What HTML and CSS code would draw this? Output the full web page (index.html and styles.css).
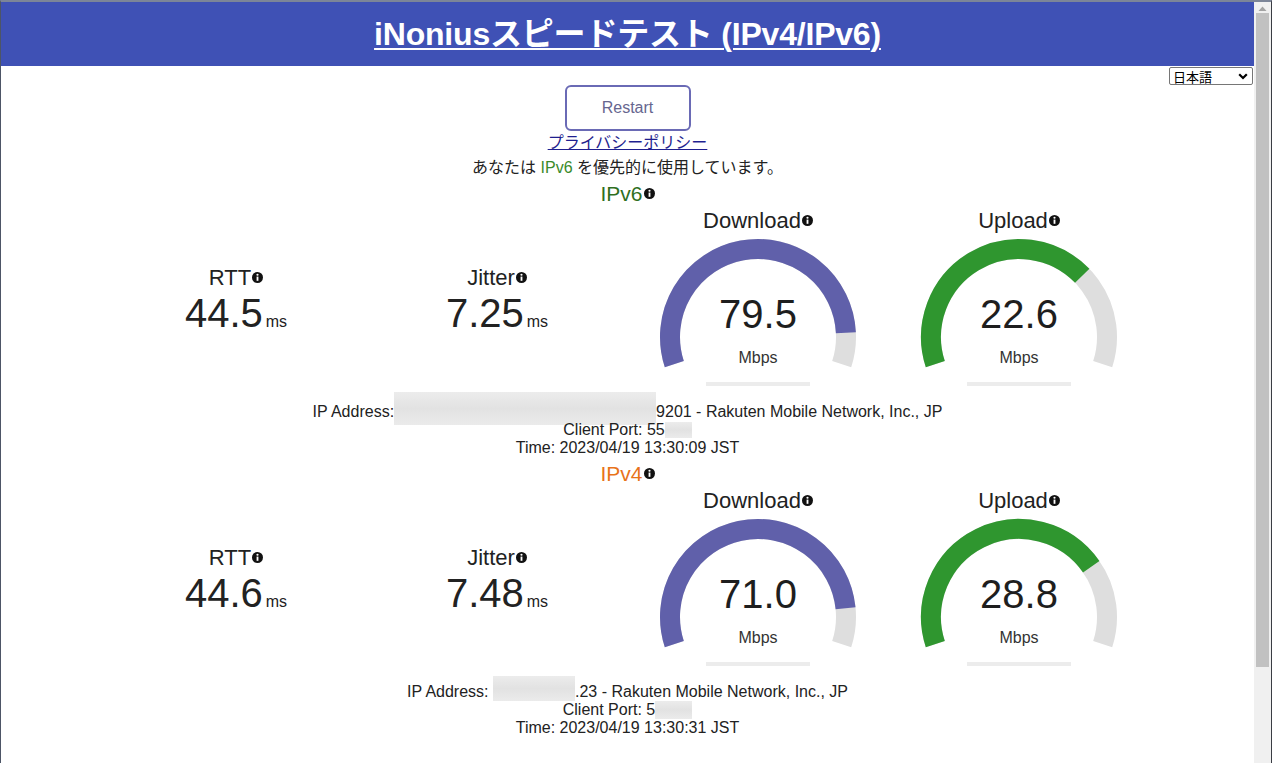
FILE: index.html
```html
<!DOCTYPE html>
<html lang="ja">
<head>
<meta charset="utf-8">
<title>iNoniusスピードテスト</title>
<link rel="stylesheet" href="styles.css">
</head>
<body>
<div class="page">
  <header class="topbar">
    <h1 class="title"><a href="#">iNoniusスピードテスト (IPv4/IPv6)</a></h1>
  </header>
  <div class="lang-row">
    <div class="lang-select"><span>日本語</span><svg class="chev" width="10" height="7" viewBox="0 0 10 7"><path d="M1.2 1.2 L5 5 L8.8 1.2" fill="none" stroke="#000" stroke-width="2.2"/></svg></div>
  </div>
  <div class="controls">
    <button class="restart" type="button">Restart</button>
    <a class="privacy" href="#">プライバシーポリシー</a>
    <p class="pref">あなたは <span class="v6">IPv6</span> を優先的に使用しています。</p>
  </div>

  <section class="test">
    <h2 class="proto proto-v6">IPv6<svg class="info" width="11" height="11" viewBox="0 0 12 12"><circle cx="6" cy="6" r="6" fill="#111"/><circle cx="6" cy="3" r="1.2" fill="#fff"/><rect x="5" y="5" width="2" height="4.6" fill="#fff"/></svg></h2>
    <div class="metrics">
      <div class="metric ping">
        <div class="label">RTT<svg class="info" width="11" height="11" viewBox="0 0 12 12"><circle cx="6" cy="6" r="6" fill="#111"/><circle cx="6" cy="3" r="1.2" fill="#fff"/><rect x="5" y="5" width="2" height="4.6" fill="#fff"/></svg></div>
        <div class="value"><span class="num">44.5</span><span class="unit">ms</span></div>
      </div>
      <div class="metric ping">
        <div class="label">Jitter<svg class="info" width="11" height="11" viewBox="0 0 12 12"><circle cx="6" cy="6" r="6" fill="#111"/><circle cx="6" cy="3" r="1.2" fill="#fff"/><rect x="5" y="5" width="2" height="4.6" fill="#fff"/></svg></div>
        <div class="value"><span class="num">7.25</span><span class="unit">ms</span></div>
      </div>
      <div class="metric gauge">
        <div class="label">Download<svg class="info" width="11" height="11" viewBox="0 0 12 12"><circle cx="6" cy="6" r="6" fill="#111"/><circle cx="6" cy="3" r="1.2" fill="#fff"/><rect x="5" y="5" width="2" height="4.6" fill="#fff"/></svg></div>
        <svg class="meter" width="260" height="154" viewBox="0 0 260 154">
          <path class="meter-bg" d="M46.31 130.19 A88 88 0 1 1 213.69 130.19"/>
          <path class="meter-dl" d="M46.31 130.19 A88 88 0 1 1 217.89 98.67"/>
          <rect class="meter-prog" x="78" y="148" width="104" height="4"/>
          <text class="meter-val" x="130" y="94">79.5</text>
          <text class="meter-unit" x="130" y="129">Mbps</text>
        </svg>
      </div>
      <div class="metric gauge">
        <div class="label">Upload<svg class="info" width="11" height="11" viewBox="0 0 12 12"><circle cx="6" cy="6" r="6" fill="#111"/><circle cx="6" cy="3" r="1.2" fill="#fff"/><rect x="5" y="5" width="2" height="4.6" fill="#fff"/></svg></div>
        <svg class="meter" width="260" height="154" viewBox="0 0 260 154">
          <path class="meter-bg" d="M46.31 130.19 A88 88 0 1 1 213.69 130.19"/>
          <path class="meter-ul" d="M46.31 130.19 A88 88 0 0 1 193.24 41.80"/>
          <rect class="meter-prog" x="78" y="148" width="104" height="4"/>
          <text class="meter-val" x="130" y="94">22.6</text>
          <text class="meter-unit" x="130" y="129">Mbps</text>
        </svg>
      </div>
    </div>
    <div class="ipinfo">
      <div>IP Address:<span class="redact r6-ip"></span>9201 - Rakuten Mobile Network, Inc., JP</div>
      <div>Client Port: 55<span class="redact r6-port"></span></div>
      <div>Time: 2023/04/19 13:30:09 JST</div>
    </div>
  </section>

  <section class="test">
    <h2 class="proto proto-v4">IPv4<svg class="info" width="11" height="11" viewBox="0 0 12 12"><circle cx="6" cy="6" r="6" fill="#111"/><circle cx="6" cy="3" r="1.2" fill="#fff"/><rect x="5" y="5" width="2" height="4.6" fill="#fff"/></svg></h2>
    <div class="metrics">
      <div class="metric ping">
        <div class="label">RTT<svg class="info" width="11" height="11" viewBox="0 0 12 12"><circle cx="6" cy="6" r="6" fill="#111"/><circle cx="6" cy="3" r="1.2" fill="#fff"/><rect x="5" y="5" width="2" height="4.6" fill="#fff"/></svg></div>
        <div class="value"><span class="num">44.6</span><span class="unit">ms</span></div>
      </div>
      <div class="metric ping">
        <div class="label">Jitter<svg class="info" width="11" height="11" viewBox="0 0 12 12"><circle cx="6" cy="6" r="6" fill="#111"/><circle cx="6" cy="3" r="1.2" fill="#fff"/><rect x="5" y="5" width="2" height="4.6" fill="#fff"/></svg></div>
        <div class="value"><span class="num">7.48</span><span class="unit">ms</span></div>
      </div>
      <div class="metric gauge">
        <div class="label">Download<svg class="info" width="11" height="11" viewBox="0 0 12 12"><circle cx="6" cy="6" r="6" fill="#111"/><circle cx="6" cy="3" r="1.2" fill="#fff"/><rect x="5" y="5" width="2" height="4.6" fill="#fff"/></svg></div>
        <svg class="meter" width="260" height="154" viewBox="0 0 260 154">
          <path class="meter-bg" d="M46.31 130.19 A88 88 0 1 1 213.69 130.19"/>
          <path class="meter-dl" d="M46.31 130.19 A88 88 0 1 1 217.57 94.29"/>
          <rect class="meter-prog" x="78" y="148" width="104" height="4"/>
          <text class="meter-val" x="130" y="94">71.0</text>
          <text class="meter-unit" x="130" y="129">Mbps</text>
        </svg>
      </div>
      <div class="metric gauge">
        <div class="label">Upload<svg class="info" width="11" height="11" viewBox="0 0 12 12"><circle cx="6" cy="6" r="6" fill="#111"/><circle cx="6" cy="3" r="1.2" fill="#fff"/><rect x="5" y="5" width="2" height="4.6" fill="#fff"/></svg></div>
        <svg class="meter" width="260" height="154" viewBox="0 0 260 154">
          <path class="meter-bg" d="M46.31 130.19 A88 88 0 1 1 213.69 130.19"/>
          <path class="meter-ul" d="M46.31 130.19 A88 88 0 0 1 202.23 52.73"/>
          <rect class="meter-prog" x="78" y="148" width="104" height="4"/>
          <text class="meter-val" x="130" y="94">28.8</text>
          <text class="meter-unit" x="130" y="129">Mbps</text>
        </svg>
      </div>
    </div>
    <div class="ipinfo">
      <div>IP Address: <span class="redact r4-ip"></span>.23 - Rakuten Mobile Network, Inc., JP</div>
      <div>Client Port: 5<span class="redact r4-port"></span></div>
      <div>Time: 2023/04/19 13:30:31 JST</div>
    </div>
  </section>
</div>
<div class="scrollbar">
  <div class="sb-arrow"><svg width="9" height="5" viewBox="0 0 9 5"><path d="M0.5 5 L4.5 0.6 L8.5 5 Z" fill="#a3a3a3"/></svg></div>
  <div class="sb-thumb"></div>
</div>
</body>
</html>
```

FILE: styles.css
```css
* { box-sizing: border-box; }

html, body { margin: 0; padding: 0; }

body {
  display: flex;
  height: 763px;
  overflow: hidden;
  border-top: 2px solid #7c8598;
  border-left: 1px solid #4d5566;
  border-right: 1px solid #3a3d44;
  background: #fff;
  color: #222;
  font-family: "Liberation Sans", "Noto Sans CJK JP", Arial, sans-serif;
}

.page {
  flex: 1;
  min-width: 0;
  text-align: center;
}

/* header */
.topbar {
  background: #3f51b5;
  height: 64px;
  display: flex;
  align-items: center;
  justify-content: center;
}

.title {
  margin: 0;
  font-size: 32px;
  font-weight: bold;
  line-height: 64px;
  letter-spacing: -0.2px;
}

.title a {
  color: #fff;
  text-decoration: underline;
  text-decoration-thickness: 2px;
  text-underline-offset: 3px;
}

/* language picker */
.lang-row {
  display: flex;
  justify-content: flex-end;
  height: 19px;
  padding: 1px 1px 0 0;
}

.lang-select {
  width: 84px;
  height: 18px;
  border: 1px solid #767676;
  border-radius: 2px;
  display: flex;
  align-items: center;
  justify-content: space-between;
  padding: 0 4px 0 3px;
  font-size: 13px;
  color: #000;
  background: #fff;
}

.chev { display: block; }

/* controls */
.controls {
  display: flex;
  flex-direction: column;
  align-items: center;
}

.restart {
  width: 126px;
  height: 46px;
  border: 2px solid #6a6ab5;
  border-radius: 6px;
  background: #fff;
  color: #66668f;
  font-family: inherit;
  font-size: 16px;
  padding: 0;
}

.privacy {
  font-size: 16px;
  line-height: 24px;
  color: #1f1f8f;
  text-decoration: underline;
}

.pref {
  margin: 0;
  font-size: 16px;
  line-height: 26px;
  color: #222;
}

.v6 { color: #3a8a2a; }

/* test sections */
.proto {
  margin: 0;
  font-size: 21px;
  line-height: 26px;
  font-weight: normal;
}

.proto-v6 { color: #2f6f1f; }
.proto-v4 { color: #e8731a; }

.info {
  display: inline-block;
  vertical-align: 2px;
  margin-left: 1px;
}

.metrics {
  display: grid;
  grid-template-columns: repeat(4, 261px);
  justify-content: center;
  align-items: center;
  padding-top: 1px;
}

.metric {
  display: flex;
  flex-direction: column;
  align-items: center;
}

.ping { padding-top: 13px; }

.label {
  font-size: 22px;
  line-height: 26px;
  color: #222;
}

.value {
  line-height: 44px;
  white-space: nowrap;
}

.num {
  font-size: 40px;
  color: #222;
}

.unit {
  font-size: 16px;
  margin-left: 3px;
  color: #222;
}

.meter { display: block; }

.meter-bg,
.meter-dl,
.meter-ul {
  fill: none;
  stroke-width: 20;
}

.meter-bg { stroke: #dedede; }
.meter-dl { stroke: #6060aa; }
.meter-ul { stroke: #2f962f; }
.meter-prog { fill: #ececec; }

.meter-val {
  font-size: 40px;
  fill: #1e1e1e;
  text-anchor: middle;
}

.meter-unit {
  font-size: 16px;
  fill: #333;
  text-anchor: middle;
}

.ipinfo {
  margin: 15px 0 4px;
  font-size: 16px;
  line-height: 18px;
  color: #222;
}

.redact {
  display: inline-block;
  vertical-align: top;
  background: linear-gradient(180deg, #ececec 0%, #e2e2e2 50%, #ebebeb 100%);
}

.r6-ip { width: 262px; height: 33px; margin-top: -11px; margin-bottom: -4px; }
.r6-port { width: 27px; height: 16px; margin-top: 1px; }
.r4-ip { width: 82px; height: 25px; margin-top: -7px; }
.r4-port { width: 37px; height: 18px; }

/* scrollbar */
.scrollbar {
  width: 17px;
  flex: none;
  background: #f0f0f0;
  display: flex;
  flex-direction: column;
  align-items: center;
}

.sb-arrow {
  height: 11px;
  display: flex;
  align-items: center;
  padding-top: 2px;
}

.sb-arrow svg { display: block; }

.sb-thumb {
  width: 13px;
  height: 654px;
  background: #c1c1c1;
}
```
